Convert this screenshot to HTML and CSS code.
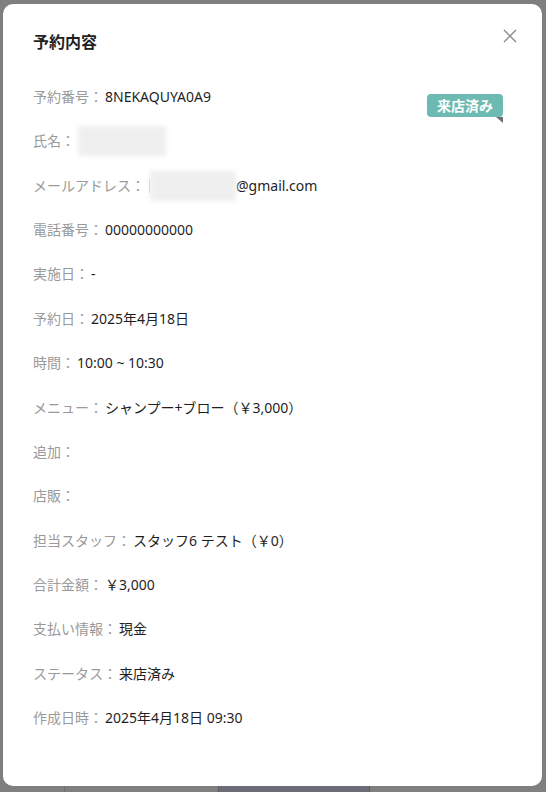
FILE: index.html
```html
<!DOCTYPE html>
<html lang="ja">
<head>
<meta charset="utf-8">
<link rel="stylesheet" href="styles.css">
</head>
<body>
<div class="page">
  <div class="modal">
    <button class="close" aria-label="閉じる">
      <svg width="14" height="14" viewBox="0 0 14 14"><path d="M1 1L13 13M13 1L1 13" stroke="#8c8c8c" stroke-width="1.4" fill="none"/></svg>
    </button>
    <h1 class="title">予約内容</h1>
    <div class="badge">来店済み<span class="fold"></span></div>
    <div class="rows">
      <div class="row"><span class="label">予約番号：</span><span class="value">8NEKAQUYA0A9</span></div>
      <div class="row"><span class="label">氏名：</span><span class="value"><span class="blur name"></span></span></div>
      <div class="row"><span class="label">メールアドレス：</span><span class="value"><span class="bar"></span><span class="blur mail"></span>@gmail.com</span></div>
      <div class="row"><span class="label">電話番号：</span><span class="value">00000000000</span></div>
      <div class="row"><span class="label">実施日：</span><span class="value">-</span></div>
      <div class="row"><span class="label">予約日：</span><span class="value">2025年4月18日</span></div>
      <div class="row"><span class="label">時間：</span><span class="value">10:00 ~ 10:30</span></div>
      <div class="row"><span class="label">メニュー：</span><span class="value">シャンプー+ブロー（￥3,000）</span></div>
      <div class="row"><span class="label">追加：</span><span class="value"></span></div>
      <div class="row"><span class="label">店販：</span><span class="value"></span></div>
      <div class="row"><span class="label">担当スタッフ：</span><span class="value">スタッフ6 テスト（￥0）</span></div>
      <div class="row"><span class="label">合計金額：</span><span class="value">￥3,000</span></div>
      <div class="row"><span class="label">支払い情報：</span><span class="value">現金</span></div>
      <div class="row"><span class="label">ステータス：</span><span class="value">来店済み</span></div>
      <div class="row"><span class="label">作成日時：</span><span class="value">2025年4月18日 09:30</span></div>
    </div>
  </div>
  <div class="under">
    <div class="seg s1"></div>
    <div class="seg s2"></div>
    <div class="seg s3"></div>
    <div class="seg s4"></div>
  </div>
</div>
</body>
</html>
```
FILE: styles.css
```css
* { box-sizing: border-box; }
html, body {
  margin: 0;
  padding: 0;
  width: 546px;
  height: 792px;
  overflow: hidden;
  background: #7f7f7f;
  font-family: "Noto Sans", "Noto Sans CJK JP", sans-serif;
}
.page {
  padding: 4px 4px 0 3px;
  height: 792px;
  display: flex;
  flex-direction: column;
}
.modal {
  position: relative;
  background: #fff;
  border-radius: 10px;
  height: 782px;
  padding: 27px 30px 0 30px;
  flex: none;
}
.close {
  position: absolute;
  top: 25px;
  right: 25px;
  width: 14px;
  height: 14px;
  padding: 0;
  border: 0;
  background: none;
  display: flex;
}
.title {
  margin: 0;
  font-size: 16px;
  line-height: 22px;
  font-weight: 700;
  color: #1f1f1f;
}
.badge {
  position: absolute;
  top: 90px;
  right: 39px;
  height: 23px;
  padding: 0 10px;
  background: #6dbab2;
  color: #fff;
  font-size: 14px;
  font-weight: 700;
  line-height: 23px;
  border-radius: 4px;
}
.fold {
  position: absolute;
  right: 0;
  top: 23px;
  width: 0;
  height: 0;
  border-top: 6px solid #6f6f6f;
  border-left: 7px solid transparent;
}
.rows {
  margin-top: 33px;
  display: flex;
  flex-direction: column;
  gap: 22.36px;
}
.row {
  display: flex;
  align-items: center;
  height: 22px;
  font-size: 14px;
  line-height: 22px;
}
.label {
  color: #9a9a9a;
}
.value {
  color: #1f1f1f;
  margin-left: 2px;
  display: flex;
  align-items: center;
}
.blur {
  display: inline-block;
  height: 30px;
  background: #efefef;
  filter: blur(2px);
}
.blur.name { width: 88px; margin-left: 1px; }
.blur.mail { width: 86px; }
.bar {
  display: inline-block;
  width: 1px;
  height: 14px;
  background: #c8c8c8;
  margin-left: 2px;
}
.under {
  flex: 1;
  display: flex;
}
.seg { height: 100%; }
.s1 { width: 61px; }
.s2 { width: 154px; border-left: 1px solid #6d6f75; }
.s3 { width: 152px; background: #6b6d76; border-left: 1px solid #5d5f66; border-right: 1px solid #5d5f66; }
.s4 { flex: 1; }
```
